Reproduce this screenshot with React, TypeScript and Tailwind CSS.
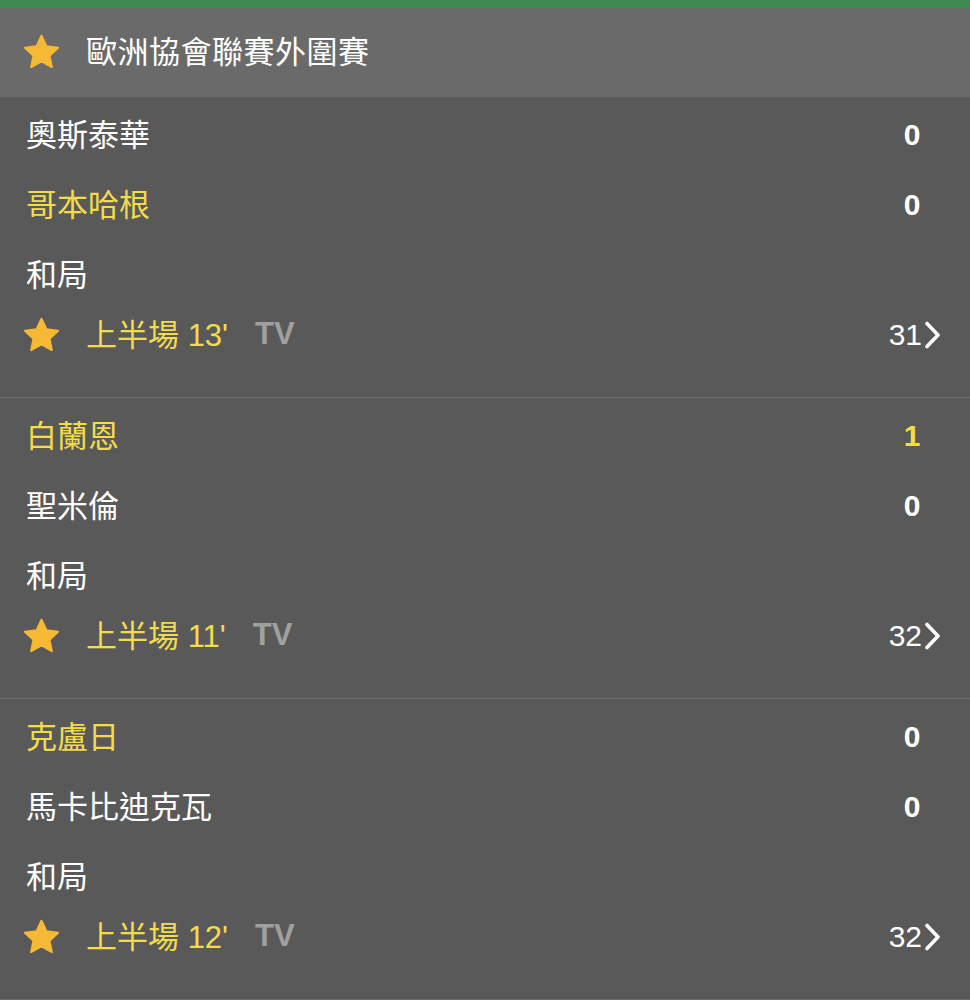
import React from "react";

const font = '"Liberation Sans", "Noto Sans CJK TC", sans-serif';

const Star = () => (
  <svg width="41" height="41" viewBox="0 0 24 24" className="shrink-0">
    <path
      d="M12 2.2l2.95 6.2 6.75.8-5 4.65 1.35 6.7L12 17.2l-6.05 3.35 1.35-6.7-5-4.65 6.75-.8z"
      fill="#f6b935"
      stroke="#f6b935"
      strokeWidth="1.2"
      strokeLinejoin="round"
    />
  </svg>
);

const Chevron = () => (
  <svg width="17" height="28" viewBox="0 0 17 28" className="ml-[2px]">
    <path d="M3 2.5l11 11.5-11 11.5" fill="none" stroke="#ffffff" strokeWidth="3.6" strokeLinecap="round" strokeLinejoin="round" />
  </svg>
);

type Match = {
  home: string;
  away: string;
  homeScore: number;
  awayScore: number;
  homeLead: boolean;
  awayLead: boolean;
  minute: string;
  count: number;
};

const matches: Match[] = [
  { home: "奧斯泰華", away: "哥本哈根", homeScore: 0, awayScore: 0, homeLead: false, awayLead: true, minute: "13'", count: 31 },
  { home: "白蘭恩", away: "聖米倫", homeScore: 1, awayScore: 0, homeLead: true, awayLead: false, minute: "11'", count: 32 },
  { home: "克盧日", away: "馬卡比迪克瓦", homeScore: 0, awayScore: 0, homeLead: true, awayLead: false, minute: "12'", count: 32 },
];

const TeamRow = ({ name, score, lead }: { name: string; score?: number; lead: boolean }) => (
  <div className="flex h-[70px] items-center justify-between pl-[26px] pr-[38px]">
    <span className={`text-[31px] ${lead ? "text-[#f2dc4c]" : "text-white"}`}>{name}</span>
    {score !== undefined && (
      <span className={`w-[40px] text-center font-bold ${score > 0 ? "text-[#f2dc4c]" : "text-white"}`}>{score}</span>
    )}
  </div>
);

const MatchBlock = ({ m }: { m: Match }) => (
  <div className="border-b border-[#6c6c6c] pt-[3px] pb-[37px]">
    <TeamRow name={m.home} score={m.homeScore} lead={m.homeLead} />
    <TeamRow name={m.away} score={m.awayScore} lead={m.awayLead} />
    <TeamRow name="和局" lead={false} />
    <div className="flex h-[50px] items-center justify-between pl-[21px] pr-[29px]">
      <div className="flex items-center">
        <Star />
        <span className="ml-[24px] text-[31px] text-[#f2dc4c]">上半場 {m.minute}</span>
        <span className="ml-[27px] -mt-[4px] text-[31px] font-bold text-[#a0a0a0]">TV</span>
      </div>
      <div className="flex items-center text-white">
        <span>{m.count}</span>
        <Chevron />
      </div>
    </div>
  </div>
);

export default function App() {
  return (
    <div className="min-h-[1000px] w-[970px] bg-[#595959] text-[30px] leading-none" style={{ fontFamily: font }}>
      <div className="h-[8px] bg-[#3f8a50]" />
      <div className="flex h-[89px] items-center bg-[#6a6a6a] pl-[21px]">
        <Star />
        <span className="ml-[24px] text-[31px] tracking-[0.5px] text-white">歐洲協會聯賽外圍賽</span>
      </div>
      {matches.map((m) => (
        <MatchBlock key={m.home} m={m} />
      ))}
    </div>
  );
}
